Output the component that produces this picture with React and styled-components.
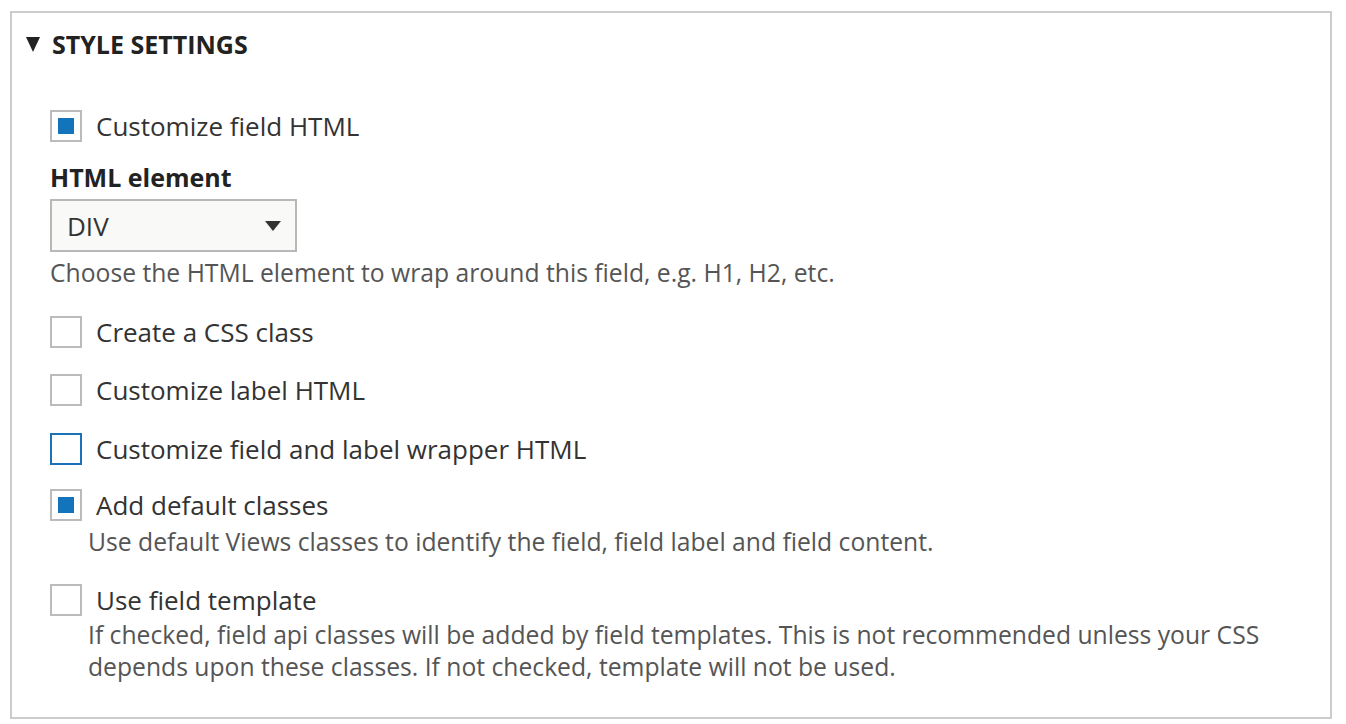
import styled, { createGlobalStyle } from "styled-components";

const GlobalStyle = createGlobalStyle`
  body {
    margin: 0;
    background: #fff;
    font-family: "Open Sans", "Noto Sans", sans-serif;
    color: #333;
  }
`;

const Fieldset = styled.div`
  margin: 11px 14px 0 10px;
  height: 708px;
  box-sizing: border-box;
  border: 2px solid #ccc;
`;

const Summary = styled.div`
  display: flex;
  align-items: center;
  gap: 12px;
  height: 62px;
  padding: 0 14px;
  font-size: 25px;
  font-weight: 700;
  text-transform: uppercase;
  color: #222;
`;

const Caret = styled.span`
  width: 0;
  height: 0;
  border-left: 7.5px solid transparent;
  border-right: 7.5px solid transparent;
  border-top: 15px solid #222;
`;

const Body = styled.div`
  padding: 35px 38px 0;
`;

const CheckItem = styled.div`
  margin-top: ${(p) => p.$gap || 0}px;
`;

const CheckRow = styled.label`
  display: flex;
  align-items: center;
  gap: 14px;
  height: 32px;
  font-size: 26px;
  color: #333;
`;

const Box = styled.span`
  width: 32px;
  height: 32px;
  box-sizing: border-box;
  border: 2px solid ${(p) => (p.$focus ? "#1c72b8" : "#bbb")};
  background: #fff;
  display: flex;
  align-items: center;
  justify-content: center;
  flex: none;

  &::after {
    content: "";
    width: 16px;
    height: 16px;
    background: ${(p) => (p.$checked ? "#1474bb" : "transparent")};
  }
`;

const Description = styled.div`
  font-size: 24.7px;
  line-height: 32px;
  color: #555;
  margin-top: ${(p) => p.$gap || 0}px;
  padding-left: ${(p) => (p.$indent ? 38 : 0)}px;
`;

const FieldLabel = styled.div`
  margin-top: 19px;
  font-size: 25px;
  line-height: 32px;
  font-weight: 700;
  color: #222;
`;

const Select = styled.div`
  margin-top: 6px;
  width: 247px;
  height: 53px;
  box-sizing: border-box;
  border: 2px solid #b8b8b8;
  background: #f9f9f8;
  display: flex;
  align-items: center;
  justify-content: space-between;
  padding: 0 14px 0 15px;
  font-size: 26px;
  color: #333;
`;

const SelectArrow = styled.span`
  width: 0;
  height: 0;
  border-left: 8px solid transparent;
  border-right: 8px solid transparent;
  border-top: 10px solid #333;
`;

const Checkbox = ({ label, checked, focus, gap }) => (
  <CheckItem $gap={gap}>
    <CheckRow>
      <Box $checked={checked} $focus={focus} />
      {label}
    </CheckRow>
  </CheckItem>
);

const App = () => {
  return (
    <>
      <GlobalStyle />
      <Fieldset>
        <Summary>
          <Caret />
          Style settings
        </Summary>
        <Body>
          <Checkbox label="Customize field HTML" checked />
          <FieldLabel>HTML element</FieldLabel>
          <Select>
            DIV
            <SelectArrow />
          </Select>
          <Description $gap={5}>
            Choose the HTML element to wrap around this field, e.g. H1, H2, etc.
          </Description>
          <Checkbox label="Create a CSS class" gap={27} />
          <Checkbox label="Customize label HTML" gap={26} />
          <Checkbox label="Customize field and label wrapper HTML" focus gap={27} />
          <Checkbox label="Add default classes" checked gap={24} />
          <Description $indent $gap={5}>
            Use default Views classes to identify the field, field label and field content.
          </Description>
          <Checkbox label="Use field template" gap={26} />
          <Description $indent $gap={3}>
            If checked, field api classes will be added by field templates. This is not
            recommended unless your CSS
            <br />
            depends upon these classes. If not checked, template will not be used.
          </Description>
        </Body>
      </Fieldset>
    </>
  );
};

export default App;
